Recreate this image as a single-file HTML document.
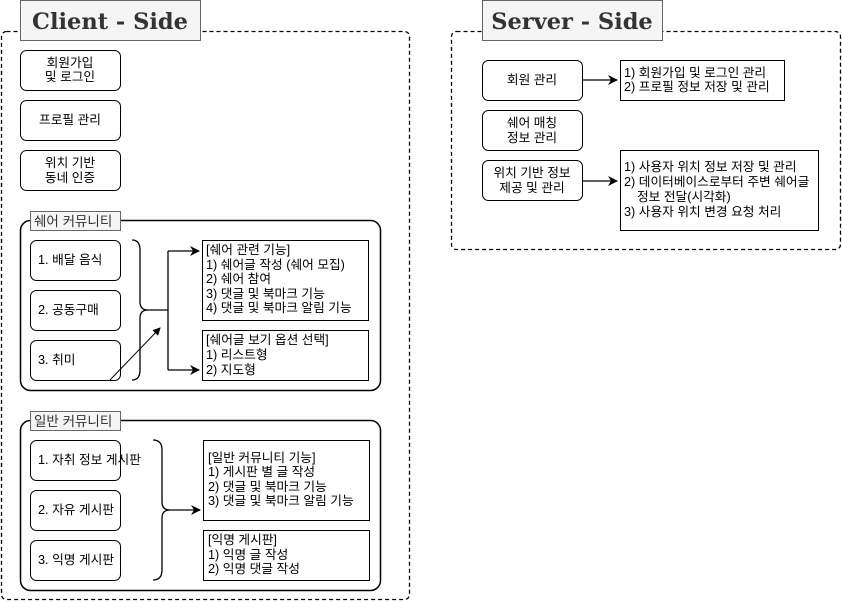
<!DOCTYPE html>
<html><head><meta charset="utf-8"><style>
html,body{margin:0;padding:0;background:#fff;width:842px;height:602px;overflow:hidden}
svg text{font-family:"Liberation Sans","Noto Sans CJK KR",sans-serif;font-size:12.7px;fill:#000}
.t{font-family:"DejaVu Serif","Liberation Serif",serif;font-weight:bold;font-size:22.5px;fill:#333}
.l{font-size:13.5px;fill:#333}
</style></head><body>
<svg width="842" height="602" viewBox="0 0 842 602" xmlns="http://www.w3.org/2000/svg">
<defs><marker id="a" markerWidth="10" markerHeight="10" refX="9" refY="5" orient="auto" markerUnits="userSpaceOnUse"><path d="M0,0 L10,5 L0,10 L3,5 Z" fill="#000"/></marker>
<marker id="b" markerWidth="8" markerHeight="8" refX="7" refY="4" orient="auto" markerUnits="userSpaceOnUse"><path d="M0,0 L8,4 L0,8 Z" fill="#000"/></marker></defs>
<g fill="none" stroke="#000" stroke-width="1.3">
<rect x="1.5" y="31.5" width="408" height="568" rx="5" stroke-dasharray="4,3"/>
<rect x="451.5" y="31.5" width="389" height="218" rx="5" stroke-dasharray="4,3"/>
</g>
<rect x="20.5" y="0.5" width="180" height="40" fill="#f5f5f5" stroke="#666"/>
<text x="110" y="29" text-anchor="middle" class="t">Client - Side</text>
<rect x="482.5" y="0.5" width="180" height="40" fill="#f5f5f5" stroke="#666"/>
<text x="572" y="29" text-anchor="middle" class="t">Server - Side</text>
<g fill="#fff" stroke="#000" stroke-width="1">
<rect x="20.5" y="50.5" width="100" height="40" rx="6"/>
<rect x="20.5" y="100.5" width="100" height="40" rx="6"/>
<rect x="20.5" y="150.5" width="100" height="40" rx="6"/>
<rect x="20.5" y="220.5" width="360" height="170" rx="10" stroke-width="1.5"/>
<rect x="30.5" y="240.5" width="90" height="40" rx="6"/>
<rect x="30.5" y="290.5" width="90" height="40" rx="6"/>
<rect x="30.5" y="340.5" width="90" height="40" rx="6"/>
<rect x="202.5" y="240.5" width="166" height="80"/>
<rect x="202.5" y="330.5" width="166" height="50"/>
<rect x="20.5" y="420.5" width="360" height="170" rx="10" stroke-width="1.5"/>
<rect x="30.5" y="440.5" width="90" height="40" rx="6"/>
<rect x="30.5" y="490.5" width="90" height="40" rx="6"/>
<rect x="30.5" y="540.5" width="90" height="40" rx="6"/>
<rect x="203.5" y="440.5" width="166" height="80"/>
<rect x="203.5" y="530.5" width="166" height="50"/>
<rect x="482.5" y="60.5" width="100" height="40" rx="6"/>
<rect x="482.5" y="110.5" width="100" height="40" rx="6"/>
<rect x="482.5" y="160.5" width="100" height="40" rx="6"/>
<rect x="620.5" y="60.5" width="164" height="40"/>
<rect x="620.5" y="150.5" width="198" height="80"/>
</g>
<rect x="30.5" y="211.5" width="90" height="19" fill="#f5f5f5" stroke="#666"/>
<text x="34" y="226" class="l">쉐어 커뮤니티</text>
<rect x="30.5" y="411.5" width="90" height="19" fill="#f5f5f5" stroke="#666"/>
<text x="34" y="426" class="l">일반 커뮤니티</text>
<g fill="none" stroke="#000" stroke-width="1.3">
<path d="M132,240 Q140,240 140,250 L140,302 Q140,310 148,310 Q140,310 140,318 L140,370 Q140,380 132,380"/>
<path d="M148,310 L168,310 M168,251 L168,370" />
<path d="M168,251 L199,251" marker-end="url(#a)"/>
<path d="M168,370 L199,370" marker-end="url(#a)"/>
<path d="M110,380 L160,328" stroke-width="1" marker-end="url(#b)"/>
<path d="M153,440 Q162,440 162,450 L162,502 Q162,510 170,510 Q162,510 162,518 L162,570 Q162,580 153,580"/>
<path d="M170,510 L200,510" marker-end="url(#a)"/>
<path d="M582,80 L617,80" marker-end="url(#a)"/>
<path d="M582,181 L617,181" marker-end="url(#a)"/>
</g>
<g text-anchor="middle">
<text x="70" y="67">회원가입</text><text x="70" y="81">및 로그인</text>
<text x="70" y="124">프로필 관리</text>
<text x="70" y="167">위치 기반</text><text x="70" y="182">동네 인증</text>
<text x="532" y="84">회원 관리</text>
<text x="532" y="127">쉐어 매칭</text><text x="532" y="142">정보 관리</text>
<text x="532" y="177">위치 기반 정보</text><text x="532" y="192">제공 및 관리</text>
</g>
<text x="38" y="264">1. 배달 음식</text>
<text x="38" y="314">2. 공동구매</text>
<text x="38" y="364">3. 취미</text>
<text x="38" y="464">1. 자취 정보 게시판</text>
<text x="38" y="514">2. 자유 게시판</text>
<text x="38" y="564">3. 익명 게시판</text>
<text x="206" y="254">[쉐어 관련 기능]</text>
<text x="206" y="269">1) 쉐어글 작성 (쉐어 모집)</text>
<text x="206" y="283">2) 쉐어 참여</text>
<text x="206" y="298">3) 댓글 및 북마크 기능</text>
<text x="206" y="312">4) 댓글 및 북마크 알림 기능</text>
<text x="206" y="344">[쉐어글 보기 옵션 선택]</text>
<text x="206" y="359">1) 리스트형</text>
<text x="206" y="374">2) 지도형</text>
<text x="208" y="462">[일반 커뮤니티 기능]</text>
<text x="208" y="476">1) 게시판 별 글 작성</text>
<text x="208" y="491">2) 댓글 및 북마크 기능</text>
<text x="208" y="505">3) 댓글 및 북마크 알림 기능</text>
<text x="208" y="544">[익명 게시판]</text>
<text x="208" y="559">1) 익명 글 작성</text>
<text x="208" y="573">2) 익명 댓글 작성</text>
<text x="624" y="77">1) 회원가입 및 로그인 관리</text>
<text x="624" y="91">2) 프로필 정보 저장 및 관리</text>
<text x="624" y="171">1) 사용자 위치 정보 저장 및 관리</text>
<text x="624" y="186">2) 데이터베이스로부터 주변 쉐어글</text>
<text x="637" y="201">정보 전달(시각화)</text>
<text x="624" y="216">3) 사용자 위치 변경 요청 처리</text>
</svg>
</body></html>
